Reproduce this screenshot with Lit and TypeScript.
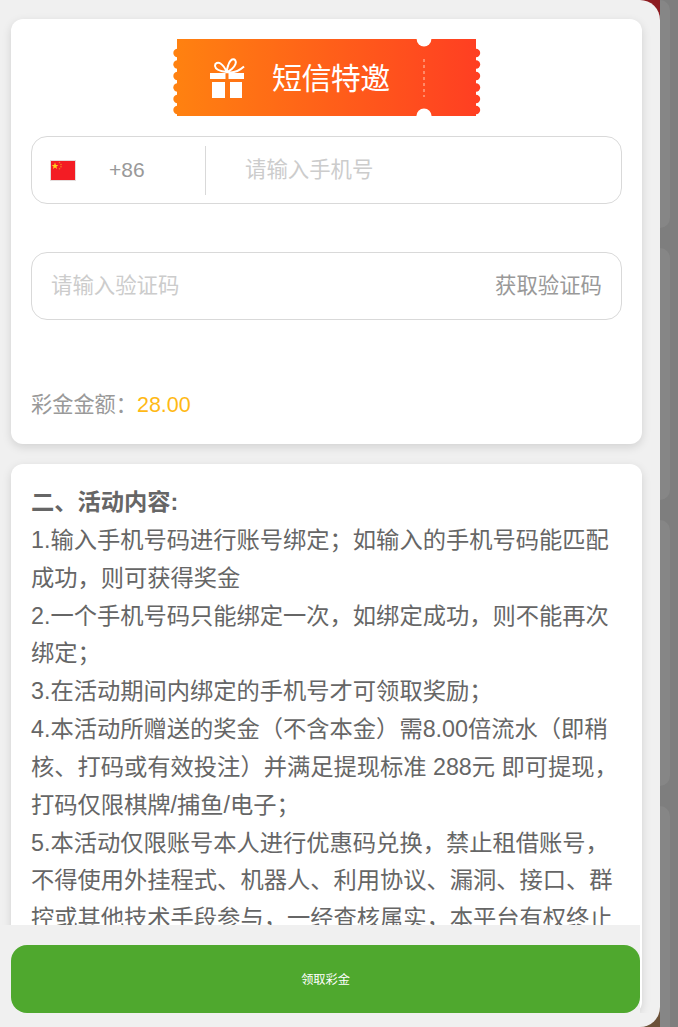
import { LitElement, html, css, svg } from "lit";
import { customElement } from "lit/decorators.js";

const bumpsY = [53, 64.5, 76, 87.5, 99, 110];

@customElement("app-root")
export class AppRoot extends LitElement {
  static styles = css`
    :host { display: block; width: 678px; height: 1027px; position: relative; overflow: hidden; background: #7f7f7f;
      font-family: "Liberation Sans", "Noto Sans CJK SC", Arial, sans-serif; }
    .backdrop { position: absolute; inset: 0; background: #7e7e7e; }
    .under { position: absolute; left: 630px; top: 0; width: 40px; height: 1027px; display: flex; flex-direction: column; gap: 20px; }
    .under div { background: #868686; border-radius: 10px; flex: none; }
    .red { position: absolute; left: 640px; top: 0; width: 20px; height: 24px; background: #8c1a1f; }
    .brown { position: absolute; left: 640px; bottom: 0; width: 20px; height: 24px; background: #6b5138; }
    .panel { position: relative; width: 660px; height: 1027px; background: #f0f0f0; border-radius: 0 20px 20px 0; overflow: hidden; }
    .scroll { height: 1013px; overflow: hidden; padding: 19px 18px 0 11px; box-sizing: border-box; display: flex; flex-direction: column; gap: 20px; }
    .card { background: #fff; border-radius: 12px; box-shadow: 0 3px 10px rgba(0,0,0,.13); padding: 0 20px; flex: none; }
    .top { height: 425px; box-sizing: border-box; padding-top: 20px; display: flex; flex-direction: column; }
    .banner { position: relative; width: 308px; height: 77px; align-self: center; display: flex; align-items: center; margin-left: 1px; color: #fff; }
    .ticket { position: absolute; inset: 0; }
    .gift { position: relative; margin-left: 37px; width: 35px; height: 41px; flex: none; }
    .banner span { position: relative; font-size: 30px; margin: 2px 0 0 27px; letter-spacing: -.6px; line-height: 1; font-weight: 400; }
    .field { height: 68px; box-sizing: border-box; border: 1px solid #d9d9d9; border-radius: 16px; display: flex; align-items: center; padding: 0 19px; font-size: 21.4px; color: #999; }
    .phone { margin-top: 20px; padding-left: 18px; }
    .code { margin-top: 48px; justify-content: space-between; padding-bottom: 6px; }
    .flag { width: 26px; height: 21px; flex: none; display: block; }
    .cc { margin-left: 33px; width: 96px; flex: none; font-size: 21px; }
    .div { width: 1px; height: 49px; background: #d9d9d9; flex: none; }
    .ph { color: #ccc; }
    .phone .ph { margin: 0 0 6px 39px; }
    .bonus { margin-top: 72px; font-size: 21.2px; color: #999; line-height: 25px; }
    .bonus b { font-weight: 400; color: #ffb915; font-size: 21.5px; }
    .rules { padding-top: 20px; font-size: 23.27px; line-height: 37.85px; color: #666; }
    .rules h3 { margin: 0; font-size: inherit; line-height: inherit; font-weight: 700; }
    .rules p { margin: 0; }
    .foot { position: absolute; left: 0; top: 925px; width: 640px; height: 88px; background: #f0f0f0; padding: 20px 0 0 11px; box-sizing: border-box; }
    .btn { height: 68px; background: #4fa82e; border-radius: 16px; display: flex; align-items: center; justify-content: center; color: #fff; font-size: 12.2px; }
  `;

  render() {
    return html`
      <div class="backdrop">
        <div class="under">
          <div style="height:228px"></div>
          <div style="height:252px"></div>
          <div style="height:266px"></div>
          <div style="height:260px"></div>
        </div>
        <div class="red"></div>
        <div class="brown"></div>
      </div>
      <div class="panel">
        <div class="scroll">
          <section class="card top">
            <div class="banner">
              <svg class="ticket" viewBox="0 0 308 77" width="308" height="77">
                <defs>
                  <linearGradient id="tk" gradientUnits="userSpaceOnUse" x1="0" x2="308" y1="0" y2="0">
                    <stop offset="0" stop-color="#ff8210"></stop>
                    <stop offset="1" stop-color="#ff3e22"></stop>
                  </linearGradient>
                </defs>
                <g fill="url(#tk)">
                  <rect x="4" y="0" width="299" height="77"></rect>
                  ${bumpsY.map((y) => svg`
                    <circle cx="4.5" cy=${y - 39} r="4.2"></circle>
                    <circle cx="303" cy=${y - 39} r="4.2"></circle>`)}
                </g>
                <circle cx="251" cy="0" r="7.4" fill="#fff"></circle>
                <circle cx="251" cy="77" r="7.6" fill="#fff"></circle>
                <path d="M251 20V58" stroke="#ffc9b0" stroke-width="1" stroke-dasharray="3 3" fill="none"></path>
              </svg>
              <svg class="gift" viewBox="0 0 35 41" fill="#fff">
                <rect x="0" y="16" width="15.500" height="6"></rect>
                <rect x="18.500" y="16" width="15.500" height="6"></rect>
                <rect x="2" y="25" width="13" height="16"></rect>
                <rect x="20" y="25" width="12" height="16"></rect>
                <path d="M16.500 15C12 14.500 5.500 13.500 5 9C4.800 6 8 4.800 10.500 6.500C13.500 8.500 15.500 12 16.500 15ZM16.500 15C17.500 10 18.500 4 22 2.500C25 1.500 26.500 4 25.500 7C24.300 10.500 20 14 16.500 15ZM16.500 15C23 16.500 29 14 34 9.500" fill="none" stroke="#fff" stroke-width="2"></path>
              </svg>
              <span>短信特邀</span>
            </div>
            <div class="field phone">
              <svg class="flag" viewBox="0 0 26 21">
                <rect x=".5" y=".5" width="25" height="20" fill="#f31c24" stroke="#e4dcdc"></rect>
                <path d="M5 2.500l.9 2.400 2.500.1-2 1.500.7 2.400-2.100-1.400-2.100 1.400.7-2.400-2-1.500 2.500-.1z" fill="#ffd21e"></path>
                <g fill="#f3801f">
                  <circle cx="9.500" cy="2.500" r=".8"></circle>
                  <circle cx="11" cy="4.500" r=".8"></circle>
                  <circle cx="11" cy="6.800" r=".8"></circle>
                  <circle cx="9.500" cy="8.800" r=".8"></circle>
                </g>
              </svg>
              <span class="cc">+86</span>
              <i class="div"></i>
              <span class="ph">请输入手机号</span>
            </div>
            <div class="field code">
              <span class="ph">请输入验证码</span>
              <span>获取验证码</span>
            </div>
            <div class="bonus">彩金金额：<b>28.00</b></div>
          </section>
          <section class="card rules">
            <h3>二、活动内容:</h3>
            <p>1.输入手机号码进行账号绑定；如输入的手机号码能匹配成功，则可获得奖金</p>
            <p>2.一个手机号码只能绑定一次，如绑定成功，则不能再次绑定；</p>
            <p>3.在活动期间内绑定的手机号才可领取奖励；</p>
            <p>4.本活动所赠送的奖金（不含本金）需8.00倍流水（即稍核、打码或有效投注）并满足提现标准 288元 即可提现，打码仅限棋牌/捕鱼/电子；</p>
            <p>5.本活动仅限账号本人进行优惠码兑换，禁止租借账号，不得使用外挂程式、机器人、利用协议、漏洞、接口、群控或其他技术手段参与，一经查核属实，本平台有权终止活动并取消相关奖励；</p>
            <p>6.本活动最终解释权归平台所有。</p>
          </section>
        </div>
        <div class="foot"><div class="btn">领取彩金</div></div>
      </div>
    `;
  }
}
